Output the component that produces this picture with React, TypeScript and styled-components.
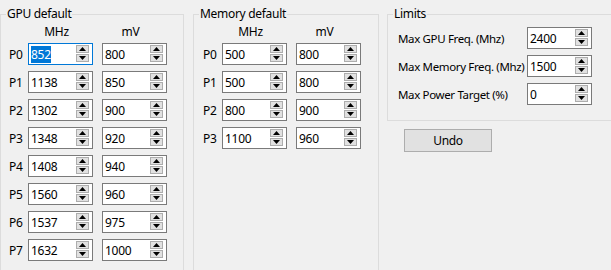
import React from "react";
import styled, { createGlobalStyle } from "styled-components";

const GlobalStyle = createGlobalStyle`
  html, body {
    margin: 0;
    padding: 0;
    background: #f0f0f0;
    overflow: hidden;
  }
  body {
    font-family: "Noto Sans", "Open Sans", sans-serif;
    font-size: 12px;
    letter-spacing: -0.3px;
    color: #000;
  }
`;

const Window = styled.div`
  width: 611px;
  height: 270px;
  overflow: hidden;
  box-sizing: border-box;
  padding-top: 6px;
  display: flex;
  align-items: flex-start;
  gap: 9px;
`;

const Group = styled.fieldset<{ $width: number; $height?: number }>`
  margin: 0;
  padding: 0;
  min-width: 0;
  border: 1px solid #dcdcdc;
  box-sizing: border-box;
  width: ${(p) => p.$width}px;
  ${(p) => (p.$height ? `height: ${p.$height}px;` : "")}
  flex-shrink: 0;
`;

const Legend = styled.legend`
  margin-left: 5px;
  padding: 0 1px;
  line-height: 16px;
  font-size: 12px;
`;

const Table = styled.div<{ $pad: number }>`
  display: flex;
  flex-direction: column;
  padding-left: ${(p) => p.$pad}px;
`;

const HeaderRow = styled.div`
  display: flex;
  gap: 9px;
  height: 21px;
  padding-left: 19px;
`;

const HeaderCell = styled.div`
  width: 65px;
  box-sizing: border-box;
  padding-right: 8px;
  text-align: center;
  line-height: 19px;
`;

const Rows = styled.div`
  display: flex;
  flex-direction: column;
  gap: 6px;
`;

const Row = styled.div`
  display: flex;
  align-items: center;
  height: 22px;
`;

const RowLabel = styled.div`
  width: 19px;
  flex-shrink: 0;
`;

const Pair = styled.div`
  display: flex;
  gap: 9px;
`;

const SpinBox = styled.div<{ $focused?: boolean }>`
  width: 65px;
  height: 22px;
  box-sizing: border-box;
  border: 1px solid ${(p) => (p.$focused ? "#0078d7" : "#7a7a7a")};
  background: #fff;
  display: flex;
  align-items: center;
  padding: 0 3px 0 2px;
`;

const SpinValue = styled.div`
  flex: 1;
  line-height: 15px;
  white-space: nowrap;
`;

const Selected = styled.span`
  background: #0078d7;
  color: #fff;
`;

const Arrows = styled.div`
  align-self: flex-start;
  margin-top: 1px;
  display: flex;
  flex-direction: column;
  gap: 1px;
`;

const ArrowBtn = styled.div`
  width: 13px;
  height: 8px;
  box-sizing: border-box;
  background: #e1e1e1;
  border: 1px solid #adadad;
  display: flex;
  align-items: center;
  justify-content: center;
`;

const RightColumn = styled.div`
  display: flex;
  flex-direction: column;
  align-items: flex-start;
  margin-left: -1px;
`;

const LimitsBody = styled.div`
  display: flex;
  flex-direction: column;
  gap: 6px;
  padding: 5px 0 15px 10px;
`;

const LimitLabel = styled.div`
  width: 129px;
  flex-shrink: 0;
  white-space: nowrap;
  font-size: 11.5px;
  letter-spacing: -0.35px;
`;

const Button = styled.button`
  margin: 8px 0 0 17px;
  width: 88px;
  height: 23px;
  box-sizing: border-box;
  background: #e1e1e1;
  border: 1px solid #adadad;
  font-family: inherit;
  font-size: 12px;
  letter-spacing: inherit;
  color: #000;
  padding: 0;
`;

function Triangle({ down }: { down?: boolean }) {
  return (
    <svg width="7" height="4" viewBox="0 0 7 4">
      <polygon points={down ? "0,0 7,0 3.5,4" : "0,4 7,4 3.5,0"} fill="#000" />
    </svg>
  );
}

function Spin({ value, focused }: { value: string; focused?: boolean }) {
  return (
    <SpinBox $focused={focused}>
      <SpinValue>{focused ? <Selected>{value}</Selected> : value}</SpinValue>
      <Arrows>
        <ArrowBtn>
          <Triangle />
        </ArrowBtn>
        <ArrowBtn>
          <Triangle down />
        </ArrowBtn>
      </Arrows>
    </SpinBox>
  );
}

const gpuStates = [
  ["852", "800"],
  ["1138", "850"],
  ["1302", "900"],
  ["1348", "920"],
  ["1408", "940"],
  ["1560", "960"],
  ["1537", "975"],
  ["1632", "1000"],
];

const memStates = [
  ["500", "800"],
  ["500", "800"],
  ["800", "900"],
  ["1100", "960"],
];

const limits = [
  ["Max GPU Freq. (Mhz)", "2400"],
  ["Max Memory Freq. (Mhz)", "1500"],
  ["Max Power Target (%)", "0"],
];

function StateTable({ rows, pad, focusFirst }: { rows: string[][]; pad: number; focusFirst?: boolean }) {
  return (
    <Table $pad={pad}>
      <HeaderRow>
        <HeaderCell>MHz</HeaderCell>
        <HeaderCell>mV</HeaderCell>
      </HeaderRow>
      <Rows>
        {rows.map(([mhz, mv], i) => (
          <Row key={i}>
            <RowLabel>P{i}</RowLabel>
            <Pair>
              <Spin value={mhz} focused={focusFirst && i === 0} />
              <Spin value={mv} />
            </Pair>
          </Row>
        ))}
      </Rows>
    </Table>
  );
}

export default function App() {
  return (
    <>
      <GlobalStyle />
      <Window>
        <Group $width={184} $height={300}>
          <Legend>GPU default</Legend>
          <StateTable rows={gpuStates} pad={8} focusFirst />
        </Group>
        <Group $width={186} $height={300}>
          <Legend>Memory default</Legend>
          <StateTable rows={memStates} pad={9} />
        </Group>
        <RightColumn>
          <Group $width={240}>
            <Legend>Limits</Legend>
            <LimitsBody>
              {limits.map(([label, value]) => (
                <Row key={label}>
                  <LimitLabel>{label}</LimitLabel>
                  <Spin value={value} />
                </Row>
              ))}
            </LimitsBody>
          </Group>
          <Button>Undo</Button>
        </RightColumn>
      </Window>
    </>
  );
}
